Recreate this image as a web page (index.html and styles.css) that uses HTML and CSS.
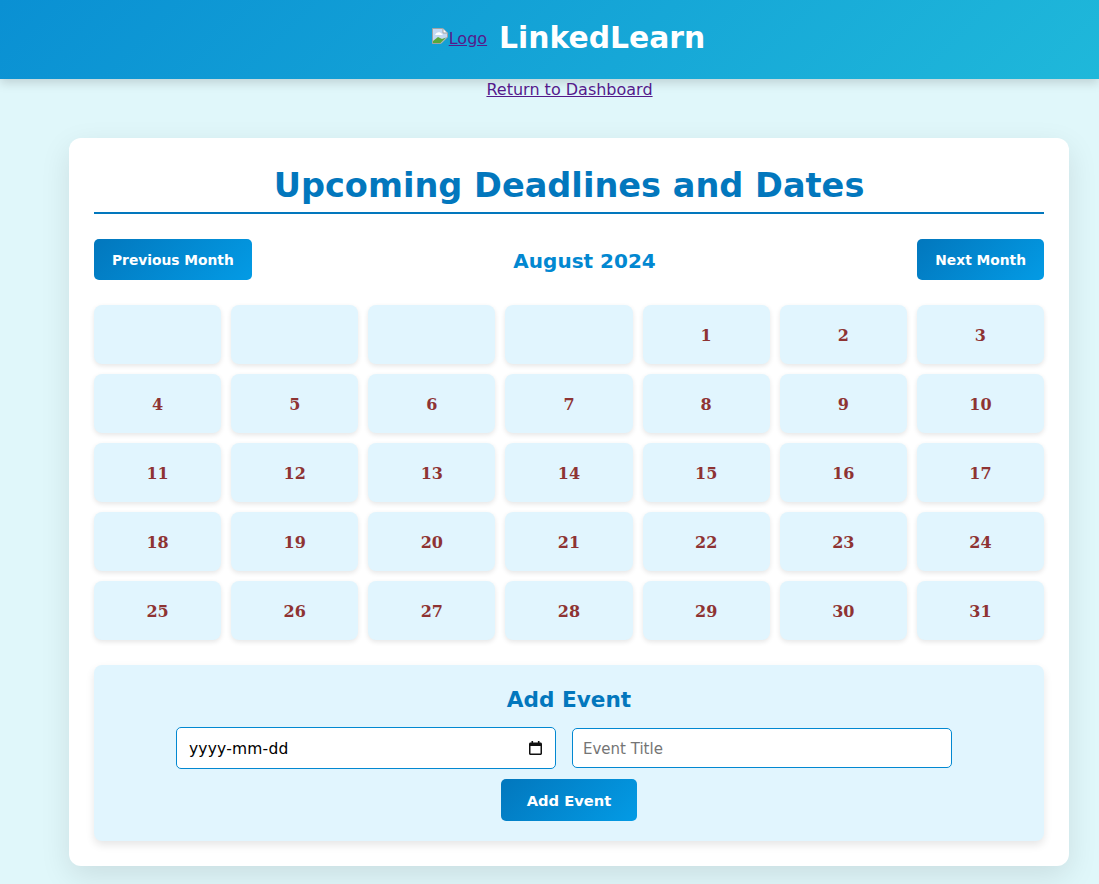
FILE: index.html
```html
<!DOCTYPE html>
<html lang="en">
<head>
    <meta charset="UTF-8">
    <meta name="viewport" content="width=device-width, initial-scale=1.0">
    <title>Upcoming Deadlines and Dates</title>
    <link rel="stylesheet" href="styles.css">
</head>
<body>
    <header class="site-header">
        <a href="#" class="logo-link"><svg class="broken-img" width="16" height="16" viewBox="0 0 16 16"><path d="M0.5 15.5V0.5H11L15.5 5V9L9 15.5Z" fill="#c3d9f3" stroke="#a3a3a3"/><path d="M11 1V5H15" fill="#fff" stroke="#a3a3a3"/><path d="M3 7C4 4 8 3 10 6L11 7Z" fill="#fff"/><path d="M1 15V13L6 9L10 11L14 9.5L8.5 15Z" fill="#58a83a"/></svg>Logo</a>
        <h1 class="site-title">LinkedLearn</h1>
    </header>
    <div class="return-row"><a href="#" class="return-link">Return to Dashboard</a></div>

    <main class="container">
        <h2 class="page-title">Upcoming Deadlines and Dates</h2>

        <div class="month-nav">
            <button class="btn">Previous Month</button>
            <h3 class="month-name">August 2024</h3>
            <button class="btn">Next Month</button>
        </div>

        <div class="calendar" id="calendar"></div>

        <section class="event-form">
            <h3>Add Event</h3>
            <div class="event-fields">
                <div class="event-date">
                    <input type="text" class="date-text" value="yyyy-mm-dd">
                    <svg class="date-icon" width="13" height="14" viewBox="0.5 0 13 14"><path d="M3 0H4.6V1.5H9.4V0H11V1.5H12C12.8 1.5 13.5 2.2 13.5 3V12.5C13.5 13.3 12.8 14 12 14H2C1.2 14 0.5 13.3 0.5 12.5V3C0.5 2.2 1.2 1.5 2 1.5H3ZM2 5V12.5H12V5Z" fill="#111"/></svg>
                </div>
                <input type="text" class="event-title" placeholder="Event Title">
            </div>
            <button class="btn btn-add">Add Event</button>
        </section>
    </main>

    <script>
        const calendar = document.getElementById('calendar');
        const blanks = 4;
        const days = 31;
        for (let i = 0; i < blanks + days; i++) {
            const cell = document.createElement('div');
            cell.className = 'day';
            cell.textContent = i < blanks ? '' : i - blanks + 1;
            calendar.appendChild(cell);
        }
    </script>
</body>
</html>
```
FILE: styles.css
```css
* {
    box-sizing: border-box;
}

html {
    height: 100%;
}

body {
    margin: 0;
    min-height: 100%;
    background-color: #e0f7fa;
    font-family: "DejaVu Sans", Verdana, sans-serif;
    overflow: hidden;
}

.site-header {
    height: 79px;
    padding-left: 38px;
    padding-bottom: 4px;
    display: flex;
    justify-content: center;
    align-items: center;
    gap: 12px;
    background: linear-gradient(135deg, #0a90d3, #1fb8da);
    box-shadow: 0 4px 10px rgba(0, 0, 0, 0.15);
}

.logo-link {
    color: #551a8b;
    font-size: 16px;
    display: flex;
    align-items: flex-start;
    margin-top: 2px;
}

.broken-img {
    flex-shrink: 0;
    margin-top: -1px;
    margin-right: 1px;
}

.site-title {
    margin: 0;
    color: #ffffff;
    font-size: 29.8px;
    font-weight: bold;
}

.return-row {
    padding-left: 40px;
    text-align: center;
    height: 59px;
    padding-top: 1px;
}

.return-link {
    color: #551a8b;
    font-size: 16px;
}

.container {
    width: 1000px;
    margin-left: 69px;
    padding: 25px;
    background-color: #ffffff;
    border-radius: 12px;
    box-shadow: 0 10px 30px rgba(0, 0, 0, 0.1);
}

.page-title {
    margin: 0 0 25px;
    padding-top: 1px;
    color: #0277bd;
    font-size: 33.6px;
    line-height: 44px;
    text-align: center;
    border-bottom: 2px solid #0277bd;
    height: 51px;
}

.month-nav {
    display: flex;
    justify-content: space-between;
    align-items: center;
    margin-bottom: 25px;
}

.month-name {
    margin: 2px 0 0;
    color: #0288d1;
    font-size: 20px;
}

.btn {
    padding: 12px 18px;
    height: 41px;
    border: none;
    border-radius: 5px;
    color: #ffffff;
    font-family: "DejaVu Sans", Verdana, sans-serif;
    font-size: 13.8px;
    font-weight: bold;
    background: linear-gradient(135deg, #0277bd, #039be5);
}

.calendar {
    display: grid;
    grid-template-columns: repeat(7, 1fr);
    grid-auto-rows: 59px;
    gap: 10px;
}

.day {
    display: flex;
    justify-content: center;
    align-items: center;
    padding-top: 2px;
    background-color: #e1f5fe;
    border-radius: 8px;
    box-shadow: 0 2px 5px rgba(0, 0, 0, 0.1);
    color: #8e3333;
    font-family: "DejaVu Serif", Georgia, serif;
    font-size: 16px;
    font-weight: bold;
}

.event-form {
    margin-top: 25px;
    height: 176px;
    padding: 21px 20px 20px;
    background-color: #e1f5fe;
    border-radius: 8px;
    box-shadow: 0 4px 8px rgba(0, 0, 0, 0.1);
    text-align: center;
}

.event-form h3 {
    margin: 0 0 13px;
    color: #0277bd;
    font-size: 21.6px;
    line-height: 28px;
}

.event-fields {
    display: flex;
    justify-content: center;
    align-items: center;
    gap: 16px;
    margin-bottom: 10px;
    padding-right: 10px;
}

.event-date,
.event-title {
    width: 380px;
    border: 1px solid #0288d1;
    border-radius: 5px;
    background-color: #ffffff;
    font-family: "DejaVu Sans", Verdana, sans-serif;
}

.event-date {
    height: 42px;
    padding: 0 13px 0 12px;
    display: flex;
    align-items: center;
}

.date-text {
    flex: 1;
    min-width: 0;
    padding: 2px 0 0;
    border: none;
    outline: none;
    color: #000000;
    font-family: "DejaVu Sans", Verdana, sans-serif;
    font-size: 15.5px;
    letter-spacing: 0.2px;
}

.date-icon {
    flex-shrink: 0;
}

.event-title {
    height: 40px;
    padding: 1px 10px 0;
    font-size: 15px;
}

.btn-add {
    width: 136px;
    height: 42px;
    padding: 0;
    font-size: 14.7px;
}
```
